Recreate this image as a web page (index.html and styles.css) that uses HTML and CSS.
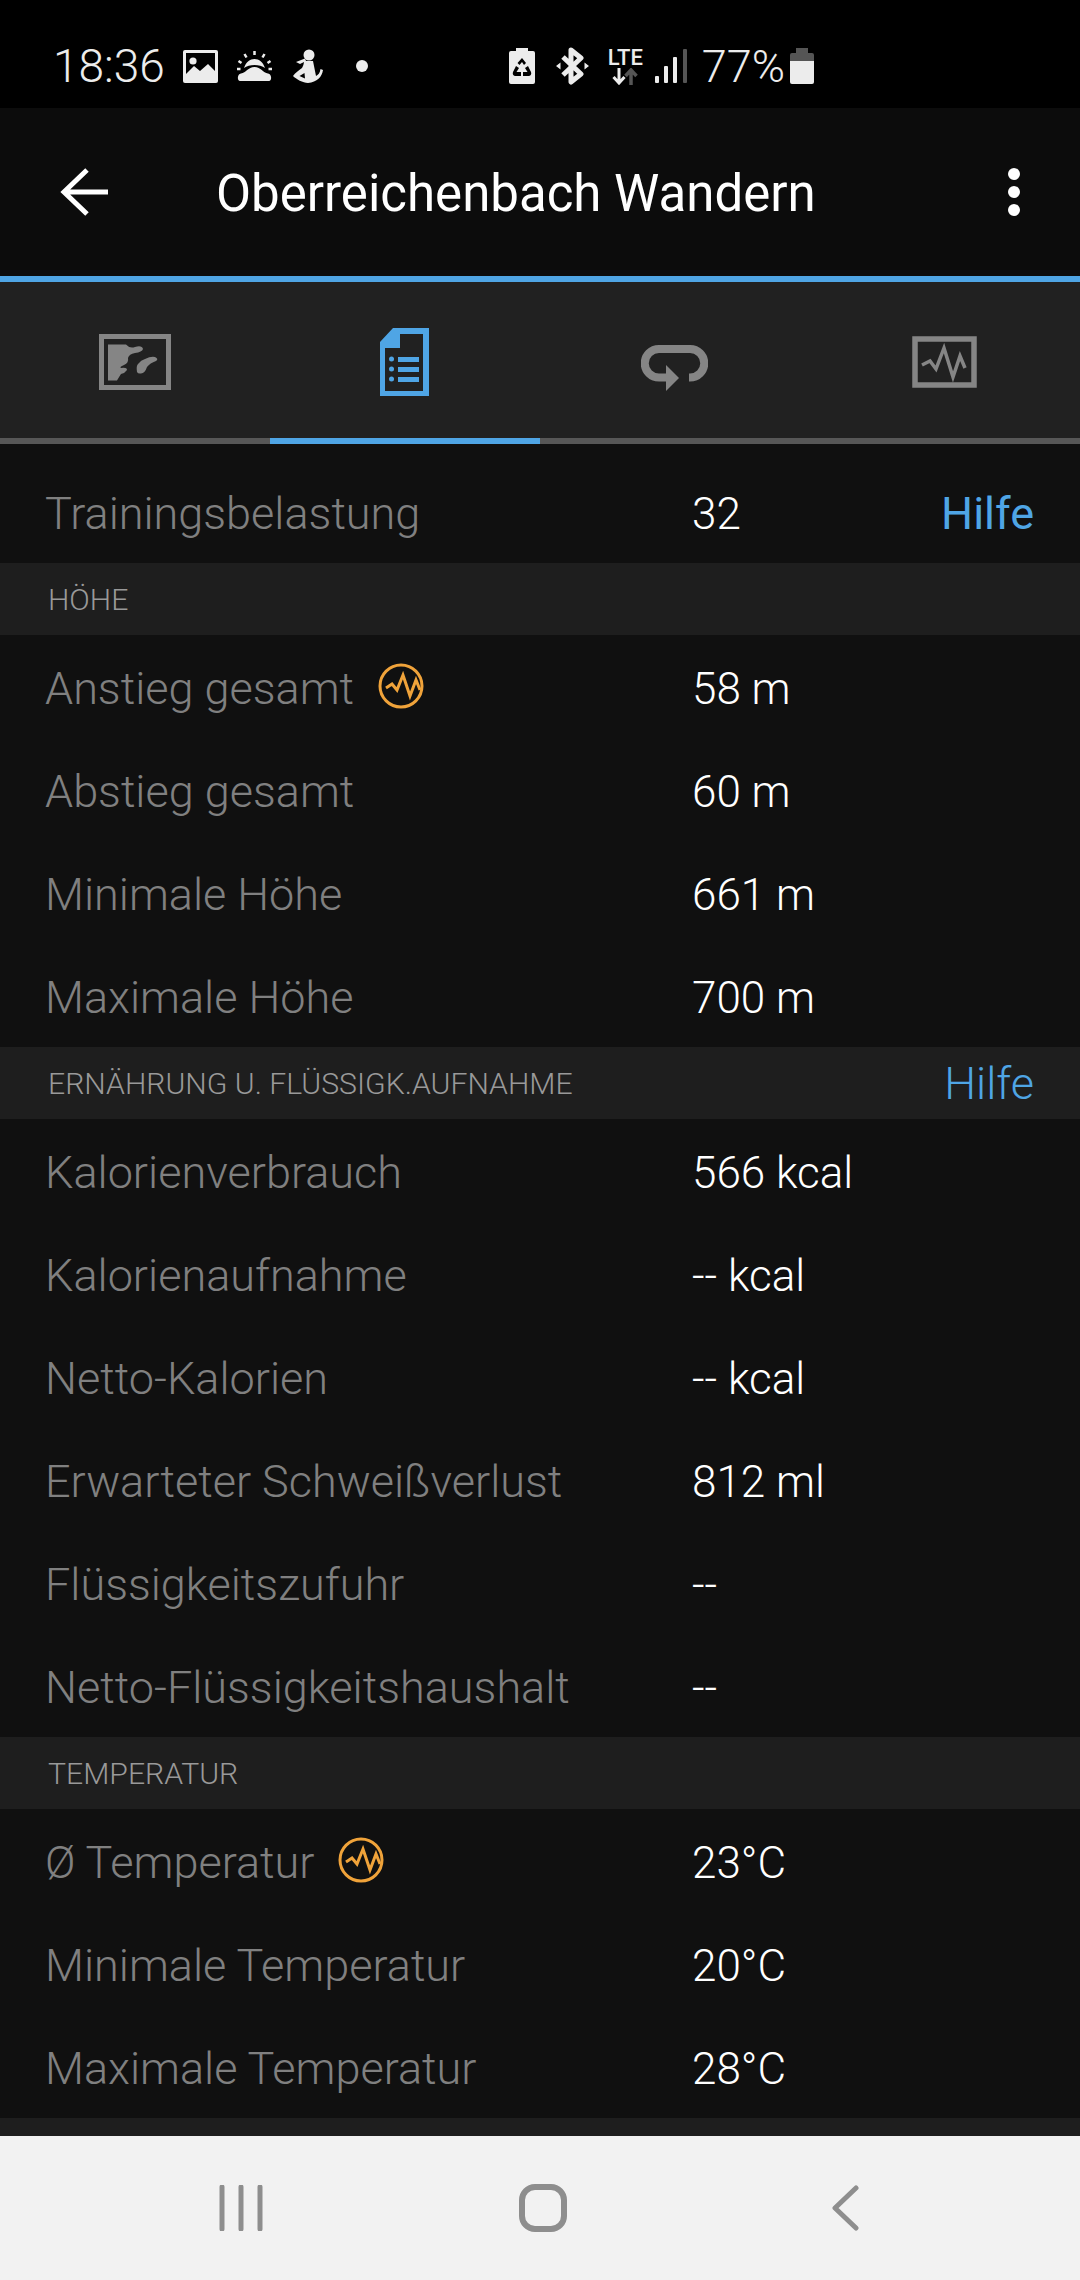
FILE: index.html
```html
<!DOCTYPE html>
<html lang="de">
<head>
    <meta charset="UTF-8">
    <meta name="viewport" content="width=device-width, initial-scale=1.0">
    <title>Oberreichenbach Wandern</title>
    <link rel="stylesheet" href="styles.css">
</head>
<body>
    <div class="status-bar">
        <div class="status-group">
            <span class="status-time">18:36</span>
            <svg class="icon-image" width="35" height="33" viewBox="0 0 35 33">
                <rect width="35" height="33" rx="2" fill="#ececec"/>
                <rect x="3" y="3" width="29" height="27" fill="#000"/>
                <circle cx="10" cy="11" r="3.6" fill="#ececec"/>
                <path d="M3 24 L11 16 L17 21 L25 14 L32 21 V30 H3 Z" fill="#ececec"/>
            </svg>
            <svg class="icon-sun" width="35" height="30" viewBox="0 0 35 30">
                <path d="M7 17 C9 11 13 8 17.500 8 C22 8 26 11 28 17 C23 13 12 13 7 17 Z" fill="#ececec"/>
                <path d="M3 30 C0 30 0 23 4 22.500 C9 22 11 16 17.500 16 C24 16 26 22 31 22.500 C35 23 35 30 32 30 Z" fill="#ececec"/>
                <path d="M17.500 0 V4 M7.500 3 L9.500 6.500 M27.500 3 L25.500 6.500 M1.500 10 L4.500 12 M33.500 10 L30.500 12 M0 18 H3.500 M35 18 H31.500" stroke="#ececec" stroke-width="2.500"/>
            </svg>
            <svg class="icon-person" width="30" height="34" viewBox="0 0 30 34">
                <circle cx="16" cy="6" r="5.500" fill="#ececec"/>
                <path d="M3 13 L12 9.500 L13 12 L7 15 Z" fill="#ececec"/>
                <path d="M11 12 H20 C21 17 22 22 23 27 C25 26 27 24 27.500 20 L30 21 C29 28 24 33 15 34 C10 34 3 30 0 27 C2 24 6 21 9 19 C10 17 11 15 11 12 Z" fill="#ececec"/>
                <path d="M11.500 24 L6.500 27 L12 29.500 Z" fill="#000"/>
            </svg>
            <span class="status-dot"></span>
        </div>
        <div class="status-group">
            <svg class="icon-saver" width="26" height="36" viewBox="0 0 26 36">
                <path d="M7 0 H19 V3 H24 Q26 3 26 5 V34 Q26 36 24 36 H2 Q0 36 0 34 V5 Q0 3 2 3 H7 Z" fill="#ececec"/>
                <path d="M13 10 L17 15 L15 17 L13 14 L10.500 17 L8.500 15 Z M7 18 L10 20 L7.500 24 H12 V28 H6 Q3 27 4 24 Z M19 18 L22 24 Q23 27 20 28 H14 V24 H18.500 L16 20 Z" fill="#000"/>
            </svg>
            <svg class="icon-bt" width="33" height="38" viewBox="0 0 33 38">
                <path d="M7 10 L25 27 L15 35 V3 L25 11 L7 28" fill="none" stroke="#ececec" stroke-width="5" stroke-linejoin="round"/>
                <path d="M0 19 L4.500 15.500 V22.500 Z M33 19 L28.500 15.500 V22.500 Z" fill="#ececec"/>
            </svg>
            <div class="net">
                <span class="net-text">LTE</span>
                <svg width="26" height="17" viewBox="0 0 26 17">
                    <path d="M7 0 V14 M1.500 9 L7 15 L12.500 9" fill="none" stroke="#ececec" stroke-width="3"/>
                    <path d="M19 17 V3 M13.500 8 L19 2 L24.500 8" fill="none" stroke="#555" stroke-width="3.500"/>
                </svg>
            </div>
            <svg class="icon-signal" width="32" height="34" viewBox="0 0 32 34">
                <rect x="0" y="27" width="4" height="7" rx="1" fill="#ececec"/>
                <rect x="9" y="17" width="4" height="17" rx="1" fill="#ececec"/>
                <rect x="18" y="8" width="4" height="26" rx="1" fill="#ececec"/>
                <rect x="28" y="0" width="4" height="34" rx="1" fill="#555"/>
            </svg>
            <span class="status-battery-text">77%</span>
            <svg class="icon-battery" width="24" height="36" viewBox="0 0 24 36">
                <path d="M6 0 H18 V5 H22 Q24 5 24 7 V13 H0 V7 Q0 5 2 5 H6 Z" fill="#555"/>
                <path d="M0 13 H24 V34 Q24 36 22 36 H2 Q0 36 0 34 Z" fill="#ececec"/>
            </svg>
        </div>
    </div>

    <header class="app-bar">
        <svg class="back-arrow" width="48" height="48" viewBox="0 0 48 48">
            <path d="M48 24 H4 M27 2 L4 24 L27 46" fill="none" stroke="#fff" stroke-width="5"/>
        </svg>
        <h1>Oberreichenbach Wandern</h1>
        <div class="menu-dots"><span></span><span></span><span></span></div>
    </header>

    <nav class="tabs">
        <div class="tab">
            <svg width="72" height="56" viewBox="0 0 72 56">
                <rect x="2.500" y="2.500" width="67" height="51" fill="none" stroke="#858585" stroke-width="5"/>
                <path d="M9 10.500 H27 Q31 15 36 13 Q43 11 44 15 Q43 18 36 19 Q30 20 29 24 Q30 29 25 31 Q20 33 22 34 Q28 33 28 36 Q26 39 22 40 Q20 43 18 46.500 H9 Z" fill="#858585"/>
                <path d="M38 38 Q37 32 39 30 Q42 26 46 25 Q52 22 56 23 Q60 25 57 27 Q51 29 48 33 Q46 39 42 39.500 Q39 40 38 38 Z" fill="#858585"/>
            </svg>
        </div>
        <div class="tab active">
            <svg width="49" height="68" viewBox="0 0 49 68">
                <path fill-rule="evenodd" d="M0 14 L13 0 H49 V68 H0 Z M20 6 V20 H5 V63 H43 V6 Z" fill="#4fa5e5"/>
                <path d="M18 29 H39 V34 H18 Z M18 39 H39 V44 H18 Z M18 49 H39 V54 H18 Z" fill="#4fa5e5"/>
                <circle cx="11.500" cy="31" r="2.500" fill="#4fa5e5"/>
                <circle cx="11.500" cy="41" r="2.500" fill="#4fa5e5"/>
                <circle cx="11.500" cy="51" r="2.500" fill="#4fa5e5"/>
            </svg>
        </div>
        <div class="tab">
            <svg class="loop-icon" width="67" height="46" viewBox="0 0 67 46">
                <path d="M48 32.500 H49 A14.250 14.250 0 0 0 49 4 H18 A14.250 14.250 0 0 0 18 32.500 H27" fill="none" stroke="#858585" stroke-width="8"/>
                <path d="M25 20 L38 33 L25 46 Z" fill="#858585"/>
            </svg>
        </div>
        <div class="tab">
            <svg width="65" height="52" viewBox="0 0 65 52">
                <rect x="3" y="3" width="59" height="46" fill="none" stroke="#858585" stroke-width="5.500"/>
                <polyline points="10,29 18,25 24,33 32,12 41,41 48,20 53,32" fill="none" stroke="#858585" stroke-width="3.500"/>
            </svg>
        </div>
    </nav>

    <main class="content">
        <div class="row first">
            <span class="label">Trainingsbelastung</span>
            <span class="value">32</span>
            <a class="help">Hilfe</a>
        </div>

        <div class="section"><span>HÖHE</span></div>
        <div class="row">
            <span class="label">Anstieg gesamt
                <svg class="chart-badge" width="46" height="46" viewBox="0 0 46 46">
                    <circle cx="23" cy="23" r="21" fill="none" stroke="#f0a33a" stroke-width="3"/>
                    <polyline points="8,25 14,21 19,27 25,12 32,33 38,17 42,27" fill="none" stroke="#f0a33a" stroke-width="3"/>
                </svg>
            </span>
            <span class="value">58 m</span>
        </div>
        <div class="row"><span class="label">Abstieg gesamt</span><span class="value">60 m</span></div>
        <div class="row"><span class="label">Minimale Höhe</span><span class="value">661 m</span></div>
        <div class="row"><span class="label">Maximale Höhe</span><span class="value">700 m</span></div>

        <div class="section"><span>ERNÄHRUNG U. FLÜSSIGK.AUFNAHME</span><a class="help light">Hilfe</a></div>
        <div class="row"><span class="label">Kalorienverbrauch</span><span class="value">566 kcal</span></div>
        <div class="row"><span class="label">Kalorienaufnahme</span><span class="value">-- kcal</span></div>
        <div class="row"><span class="label">Netto-Kalorien</span><span class="value">-- kcal</span></div>
        <div class="row"><span class="label">Erwarteter Schweißverlust</span><span class="value">812 ml</span></div>
        <div class="row"><span class="label">Flüssigkeitszufuhr</span><span class="value">--</span></div>
        <div class="row"><span class="label">Netto-Flüssigkeitshaushalt</span><span class="value">--</span></div>

        <div class="section"><span>TEMPERATUR</span></div>
        <div class="row">
            <span class="label">Ø Temperatur
                <svg class="chart-badge" width="46" height="46" viewBox="0 0 46 46">
                    <circle cx="23" cy="23" r="21" fill="none" stroke="#f0a33a" stroke-width="3"/>
                    <polyline points="8,25 14,21 19,27 25,12 32,33 38,17 42,27" fill="none" stroke="#f0a33a" stroke-width="3"/>
                </svg>
            </span>
            <span class="value">23°C</span>
        </div>
        <div class="row"><span class="label">Minimale Temperatur</span><span class="value">20°C</span></div>
        <div class="row"><span class="label">Maximale Temperatur</span><span class="value">28°C</span></div>

        <div class="section"></div>
    </main>

    <footer class="nav-bar">
        <div class="nav-item">
            <svg width="44" height="46" viewBox="0 0 44 46">
                <path d="M3 2 V44 M22 2 V44 M41 2 V44" fill="none" stroke="#8e8e8e" stroke-width="5" stroke-linecap="round"/>
            </svg>
        </div>
        <div class="nav-item">
            <svg width="48" height="48" viewBox="0 0 48 48">
                <rect x="3" y="3" width="42" height="42" rx="13" fill="none" stroke="#8e8e8e" stroke-width="6"/>
            </svg>
        </div>
        <div class="nav-item">
            <svg width="27" height="46" viewBox="0 0 27 46">
                <path d="M24 3 L3 23 L24 43" fill="none" stroke="#8e8e8e" stroke-width="5" stroke-linecap="round" stroke-linejoin="round"/>
            </svg>
        </div>
    </footer>
</body>
</html>
```

FILE: styles.css
```css
* {
    box-sizing: border-box;
}
html, body {
    margin: 0;
    height: 2280px;
    overflow: hidden;
}
body {
    display: flex;
    flex-direction: column;
    font-family: Roboto, "Liberation Sans", sans-serif;
    background-color: #101010;
    color: #fff;
}

/* status bar */
.status-bar {
    flex: 0 0 108px;
    display: flex;
    justify-content: space-between;
    align-items: center;
    padding: 24px 266px 0 53px;
    background-color: #000;
    color: #ececec;
}
.status-group {
    display: flex;
    align-items: center;
}
.status-time {
    font-size: 46px;
    font-weight: 300;
    margin-right: 18px;
}
.icon-sun {
    margin-left: 19px;
}
.icon-person {
    margin-left: 21px;
}
.status-dot {
    width: 12px;
    height: 12px;
    margin-left: 33px;
    border-radius: 50%;
    background-color: #ececec;
}
.icon-bt {
    margin-left: 21px;
}
.net {
    display: flex;
    flex-direction: column;
    align-items: center;
    margin-left: 19px;
    width: 35px;
}
.net-text {
    font-size: 22px;
    line-height: 20px;
    font-weight: 500;
}
.icon-signal {
    margin-left: 12px;
}
.status-battery-text {
    font-size: 45px;
    font-weight: 300;
    margin-left: 15px;
    margin-right: 5px;
}

/* app bar */
.app-bar {
    flex: 0 0 174px;
    display: flex;
    align-items: center;
    padding-left: 60px;
    background-color: #0c0c0c;
    border-bottom: 6px solid #4fa5e5;
}
.app-bar h1 {
    margin: 0 0 0 108px;
    padding-top: 2px;
    font-size: 51px;
    font-weight: 400;
}
.menu-dots {
    display: flex;
    flex-direction: column;
    gap: 6px;
    margin-left: auto;
    margin-right: 60px;
}
.menu-dots span {
    width: 12px;
    height: 12px;
    border-radius: 50%;
    background-color: #fff;
}

/* tabs */
.tabs {
    flex: 0 0 162px;
    display: grid;
    grid-template-columns: repeat(4, 1fr);
    background-color: #212121;
}
.tab {
    display: flex;
    align-items: center;
    justify-content: center;
    padding-top: 4px;
    border-bottom: 6px solid #575757;
}
.tab + .tab {
    padding-right: 2px;
}
.tab.active {
    border-bottom-color: #4fa5e5;
}
.loop-icon {
    margin-top: 12px;
}

/* list */
.content {
    flex: 1;
    overflow: hidden;
}
.row {
    height: 103px;
    display: flex;
    align-items: center;
    padding: 4px 46px 0 45px;
    font-size: 45px;
    font-weight: 300;
}
.row.first {
    height: 119px;
    padding-top: 20px;
}
.label {
    width: 647px;
    display: flex;
    align-items: center;
    gap: 24px;
    color: #808080;
}
.chart-badge {
    margin-top: -5px;
}
.value {
    color: #fff;
    font-size: 44px;
}
.help {
    margin-left: auto;
    color: #4fa5e5;
    font-weight: 400;
}
.help.light {
    font-size: 45px;
    font-weight: 300;
}
.section {
    height: 72px;
    display: flex;
    align-items: center;
    justify-content: space-between;
    padding: 0 46px 0 48px;
    background-color: #1e1e1e;
    color: #999;
    font-size: 30.2px;
    font-weight: 300;
}

/* bottom navigation */
.nav-bar {
    flex: 0 0 144px;
    display: grid;
    grid-template-columns: repeat(3, 302px);
    padding-left: 90px;
    background-color: #f2f2f2;
}
.nav-item {
    display: flex;
    align-items: center;
    justify-content: center;
}
```
